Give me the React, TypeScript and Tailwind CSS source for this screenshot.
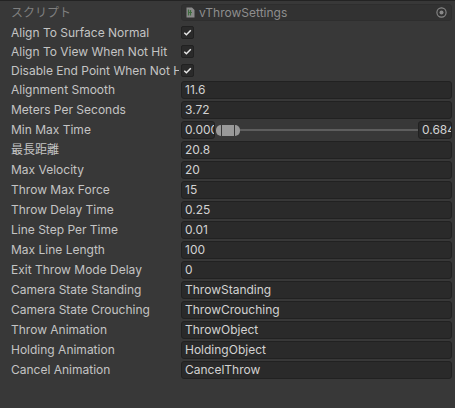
const font = { fontFamily: "Inter, 'Noto Sans CJK JP', sans-serif" };

const checks = [
  "Align To Surface Normal",
  "Align To View When Not Hit",
  "Disable End Point When Not Hit",
];

const fieldsA = [
  ["Alignment Smooth", "11.6"],
  ["Meters Per Seconds", "3.72"],
];

const fieldsB = [
  ["最長距離", "20.8"],
  ["Max Velocity", "20"],
  ["Throw Max Force", "15"],
  ["Throw Delay Time", "0.25"],
  ["Line Step Per Time", "0.01"],
  ["Max Line Length", "100"],
  ["Exit Throw Mode Delay", "0"],
  ["Camera State Standing", "ThrowStanding"],
  ["Camera State Crouching", "ThrowCrouching"],
  ["Throw Animation", "ThrowObject"],
  ["Holding Animation", "HoldingObject"],
  ["Cancel Animation", "CancelThrow"],
];

function Label({ text, dim }: { text: string; dim?: boolean }) {
  return (
    <div
      className={`mr-[2px] w-[179px] shrink-0 overflow-hidden whitespace-nowrap pl-[11px] leading-[16px] ${
        dim ? "text-[#7f7f7f]" : "text-[#c4c4c4]"
      }`}
    >
      {text}
    </div>
  );
}

function Field({ value }: { value: string }) {
  return (
    <div className="flex h-[18px] flex-1 items-center overflow-hidden whitespace-nowrap rounded-[3px] border border-[#212121] bg-[#2a2a2a] pl-[3px] leading-[16px] text-[#d2d2d2]">
      {value}
    </div>
  );
}

function Row({ label, value }: { label: string; value: string }) {
  return (
    <div className="flex h-[18px] items-center">
      <Label text={label} />
      <Field value={value} />
    </div>
  );
}

function Check() {
  return (
    <div className="flex h-[13px] w-[13px] items-center justify-center rounded-[2px] border border-[#212121] bg-[#2a2a2a]">
      <svg width="9" height="9" viewBox="0 0 9 9">
        <path d="M1.3 4.8 L3.4 6.8 L7.8 2.2" fill="none" stroke="#e8e8e8" strokeWidth="1.5" />
      </svg>
    </div>
  );
}

export default function App() {
  return (
    <div
      className="h-[408px] w-[455px] overflow-hidden border-t border-[#232323] bg-[#383838] pr-[3px] text-[12px]"
      style={font}
    >
      <div className="flex flex-col pt-[3px]">
        {/* Script reference */}
        <div className="flex h-[17px] items-center">
          <Label text="スクリプト" dim />
          <div className="flex h-[17px] flex-1 items-center rounded-[3px] border border-[#2e2e2e] bg-[#323232] leading-[15px] text-[#8e8e8e]">
            <svg width="9" height="11" viewBox="0 0 9 11" className="ml-[4px] mr-[4px]">
              <path d="M0.5 0.5 H6 L8.5 3 V10.5 H0.5 Z" fill="#8a8a8a" />
              <path d="M2.5 2.5 V8.5 M4.5 3 V8.5 M3 5.5 H6" stroke="#3f6b3f" strokeWidth="1.2" />
            </svg>
            <span className="flex-1">vThrowSettings</span>
            <div className="flex h-full w-[19px] items-center justify-center">
              <svg width="11" height="11" viewBox="0 0 11 11">
                <circle cx="5.5" cy="5.5" r="4.6" fill="none" stroke="#8a8a8a" strokeWidth="1.1" />
                <circle cx="5.5" cy="5.5" r="2" fill="#8a8a8a" />
              </svg>
            </div>
          </div>
        </div>

        <div className="mt-[2px] flex flex-col">
          {checks.map((c) => (
            <div key={c} className="flex h-[19px] items-center">
              <Label text={c} />
              <Check />
            </div>
          ))}
        </div>

        <div className="mt-[1px] flex flex-col gap-[2px]">
          {fieldsA.map(([l, v]) => (
            <Row key={l} label={l} value={v} />
          ))}

          {/* Min max slider */}
          <div className="flex h-[18px] items-center">
            <Label text="Min Max Time" />
            <div className="flex flex-1 items-center">
              <div className="flex h-[18px] w-[34px] items-center overflow-hidden whitespace-nowrap rounded-[3px] border border-[#212121] bg-[#2a2a2a] pl-[3px] leading-[16px] text-[#d2d2d2]">
                0.000
              </div>
              <div className="ml-[1px] flex h-[11px] items-center gap-[1px]">
                <div className="h-[11px] w-[5px] rounded-l-full bg-[#999999]" />
                <div className="h-[11px] w-[12px] bg-[#999999]" />
                <div className="h-[11px] w-[5px] rounded-r-full bg-[#999999]" />
              </div>
              <div className="h-[2px] flex-1 bg-[#5e5e5e]" />
              <div className="flex h-[18px] w-[34px] items-center overflow-hidden whitespace-nowrap rounded-[3px] border border-[#212121] bg-[#2a2a2a] pl-[3px] leading-[16px] text-[#d2d2d2]">
                0.684
              </div>
            </div>
          </div>

          {fieldsB.map(([l, v]) => (
            <Row key={l} label={l} value={v} />
          ))}
        </div>
      </div>
    </div>
  );
}
